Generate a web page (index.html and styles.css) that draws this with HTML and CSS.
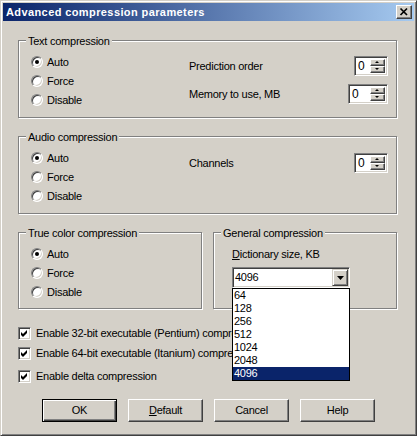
FILE: index.html
```html
<!DOCTYPE html>
<html>
<head>
<meta charset="utf-8">
<link rel="stylesheet" href="styles.css">
</head>
<body>
<div class="window">
  <div class="titlebar">
    <span class="title">Advanced compression parameters</span>
    <span class="close-btn"><svg width="14" height="12" viewBox="0 0 14 12"><path d="M3.5 2.5 L10 9 M10 2.5 L3.5 9" stroke="#000" stroke-width="1.7" fill="none"/></svg></span>
  </div>
  <div class="client">
    <div class="group group-wide">
      <span class="legend">Text compression</span>
      <div class="radios">
        <div class="radio-row"><span class="radio checked"></span><span>Auto</span></div>
        <div class="radio-row"><span class="radio"></span><span>Force</span></div>
        <div class="radio-row"><span class="radio"></span><span>Disable</span></div>
      </div>
      <div class="settings">
        <div class="setting"><span>Prediction order</span>
          <span class="spinner w34"><span class="spin-value">0</span><span class="spin-btns"><span class="spin-btn up"></span><span class="spin-btn down"></span></span></span>
        </div>
        <div class="setting"><span>Memory to use, MB</span>
          <span class="spinner w40"><span class="spin-value">0</span><span class="spin-btns"><span class="spin-btn up"></span><span class="spin-btn down"></span></span></span>
        </div>
      </div>
    </div>

    <div class="group group-wide group-audio">
      <span class="legend">Audio compression</span>
      <div class="radios">
        <div class="radio-row"><span class="radio checked"></span><span>Auto</span></div>
        <div class="radio-row"><span class="radio"></span><span>Force</span></div>
        <div class="radio-row"><span class="radio"></span><span>Disable</span></div>
      </div>
      <div class="settings settings-audio">
        <div class="setting"><span>Channels</span>
          <span class="spinner w34"><span class="spin-value">0</span><span class="spin-btns"><span class="spin-btn up"></span><span class="spin-btn down"></span></span></span>
        </div>
      </div>
    </div>

    <div class="row-bottom">
      <div class="group group-half">
        <span class="legend">True color compression</span>
        <div class="radios">
          <div class="radio-row"><span class="radio checked"></span><span>Auto</span></div>
          <div class="radio-row"><span class="radio"></span><span>Force</span></div>
          <div class="radio-row"><span class="radio"></span><span>Disable</span></div>
        </div>
      </div>
      <div class="group group-half group-general">
        <span class="legend">General compression</span>
        <div class="dict-label"><u>D</u>ictionary size, KB</div>
        <div class="combo">
          <span class="combo-value">4096</span>
          <span class="combo-btn"><svg width="7" height="4" viewBox="0 0 7 4"><path d="M0 0 H7 L3.5 4 Z" fill="#000"/></svg></span>
          <div class="dropdown">
            <div class="item">64</div>
            <div class="item">128</div>
            <div class="item">256</div>
            <div class="item">512</div>
            <div class="item">1024</div>
            <div class="item">2048</div>
            <div class="item selected">4096</div>
          </div>
        </div>
      </div>
    </div>

    <div class="checks">
      <div class="check-row"><span class="checkbox"><svg width="9" height="9" viewBox="0 0 9 9"><path d="M1 3 L3 5 L7 1 L7 4 L3 8 L1 6 Z" fill="#000"/></svg></span><span>Enable 32-bit executable (Pentium) compression</span></div>
      <div class="check-row"><span class="checkbox"><svg width="9" height="9" viewBox="0 0 9 9"><path d="M1 3 L3 5 L7 1 L7 4 L3 8 L1 6 Z" fill="#000"/></svg></span><span>Enable 64-bit executable (Itanium) compression</span></div>
      <div class="check-row check-last"><span class="checkbox"><svg width="9" height="9" viewBox="0 0 9 9"><path d="M1 3 L3 5 L7 1 L7 4 L3 8 L1 6 Z" fill="#000"/></svg></span><span>Enable delta compression</span></div>
    </div>

    <div class="buttons">
      <button class="btn btn-default">OK</button>
      <button class="btn"><u>D</u>efault</button>
      <button class="btn">Cancel</button>
      <button class="btn">Help</button>
    </div>
  </div>
</div>
</body>
</html>
```
FILE: styles.css
```css
* { box-sizing: border-box; }
html, body { margin: 0; padding: 0; }
body {
  font-family: "Liberation Sans", Arial, sans-serif;
  font-size: 11px;
  letter-spacing: -0.25px;
  color: #000;
  background: #d4d0c8;
}
.window {
  position: relative;
  width: 417px;
  height: 436px;
  background: #d4d0c8;
  border: 1px solid;
  border-color: #d4d0c8 #404040 #404040 #d4d0c8;
  box-shadow: inset 1px 1px #fff, inset -1px -1px #808080;
  padding: 2px;
  display: flex;
  flex-direction: column;
}
.titlebar {
  height: 18px;
  flex: none;
  display: flex;
  align-items: center;
  justify-content: space-between;
  padding: 0 2px 0 3px;
  background: linear-gradient(to right, #0a246a, #a6caf0);
}
.title {
  color: #fff;
  font-weight: bold;
  letter-spacing: 0.4px;
  line-height: 18px;
}
.close-btn {
  width: 16px;
  height: 14px;
  background: #d4d0c8;
  border: 1px solid;
  border-color: #fff #404040 #404040 #fff;
  box-shadow: inset -1px -1px #808080;
  display: flex;
  align-items: center;
  justify-content: center;
}
.close-btn svg { display: block; }
.client {
  flex: 1;
  padding: 19px 16px 0 15px;
  display: flex;
  flex-direction: column;
}
.group {
  position: relative;
  border: 1px solid #808080;
  box-shadow: inset 1px 1px #fff, 1px 1px #fff;
}
.group-wide {
  width: 379px;
  height: 78px;
  display: flex;
}
.group-audio { margin-top: 18px; }
.row-bottom {
  margin-top: 18px;
  display: flex;
  gap: 11px;
}
.group-half {
  width: 184px;
  height: 77px;
}
.legend {
  position: absolute;
  top: -6px;
  left: 7px;
  padding: 0 2px;
  line-height: 13px;
  background: #d4d0c8;
}
.radios {
  margin: 11px 0 0 12px;
  width: 158px;
}
.radio-row {
  height: 19px;
  display: flex;
  align-items: center;
}
.radio {
  position: relative;
  width: 12px;
  height: 12px;
  margin-right: 4px;
  border-radius: 50%;
  background: #fff;
  border: 1px solid;
  border-color: #808080 #fff #fff #808080;
  box-shadow: inset 1px 1px #404040, inset -1px -1px #d4d0c8;
}
.radio.checked::after {
  content: "";
  position: absolute;
  left: 3px;
  top: 3px;
  width: 4px;
  height: 4px;
  border-radius: 50%;
  background: #000;
}
.settings {
  flex: 1;
  margin: 15px 8px 0 0;
  display: flex;
  flex-direction: column;
  gap: 8px;
}
.settings-audio { margin-top: 16px; }
.setting {
  height: 20px;
  display: flex;
  align-items: center;
  justify-content: space-between;
}
.spinner {
  height: 20px;
  display: flex;
  background: #fff;
  border: 1px solid;
  border-color: #808080 #fff #fff #808080;
  box-shadow: inset 1px 1px #404040, inset -1px -1px #d4d0c8;
  padding: 2px;
}
.w34 { width: 34px; }
.w40 { width: 40px; }
.spin-value {
  flex: 1;
  line-height: 14px;
  padding-left: 1px;
  font-size: 12px;
}
.spin-btns {
  width: 15px;
  display: flex;
  flex-direction: column;
}
.spin-btn {
  position: relative;
  flex: 1;
  background: #d4d0c8;
  border: 1px solid;
  border-color: #fff #404040 #404040 #fff;
  box-shadow: inset -1px -1px #808080;
}
.spin-btn::after {
  content: "";
  position: absolute;
  left: 4px;
  width: 0;
  height: 0;
  border-left: 2px solid transparent;
  border-right: 2px solid transparent;
}
.spin-btn.up::after { top: 1px; border-bottom: 2px solid #000; }
.spin-btn.down::after { top: 1px; border-top: 2px solid #000; }
.dict-label {
  margin: 15px 0 0 18px;
  line-height: 13px;
}
.combo {
  position: relative;
  margin: 6px 0 0 18px;
  width: 118px;
  height: 21px;
  display: flex;
  background: #fff;
  border: 1px solid;
  border-color: #808080 #fff #fff #808080;
  box-shadow: inset 1px 1px #404040, inset -1px -1px #d4d0c8;
  padding: 1px;
}
.combo-value {
  flex: 1;
  line-height: 17px;
  padding-left: 1px;
}
.combo-btn {
  width: 16px;
  background: #d4d0c8;
  border: 1px solid;
  border-color: #d4d0c8 #404040 #404040 #d4d0c8;
  box-shadow: inset 1px 1px #fff, inset -1px -1px #808080;
  display: flex;
  align-items: center;
  justify-content: center;
}
.combo-btn svg { display: block; }
.dropdown {
  position: absolute;
  z-index: 2;
  left: -1px;
  top: 20px;
  width: 118px;
  height: 93px;
  background: #fff;
  border: 1px solid #000;
}
.item {
  height: 13px;
  line-height: 13px;
  padding-left: 1px;
}
.item.selected {
  background: #0a246a;
  color: #fff;
}
.checks {
  margin-top: 14px;
}
.check-row {
  height: 20px;
  display: flex;
  align-items: center;
  white-space: nowrap;
}
.check-last { margin-top: 3px; }
.checkbox {
  width: 13px;
  height: 13px;
  margin-right: 5px;
  flex: none;
  background: #fff;
  border: 1px solid;
  border-color: #808080 #fff #fff #808080;
  box-shadow: inset 1px 1px #404040, inset -1px -1px #d4d0c8;
  padding: 1px;
}
.checkbox svg { display: block; }
.buttons {
  margin: 13px 0 0 24px;
  display: flex;
  gap: 11px;
}
.btn {
  width: 75px;
  height: 23px;
  margin: 0;
  padding: 0;
  font: inherit;
  letter-spacing: inherit;
  color: #000;
  background: #d4d0c8;
  border: 1px solid;
  border-color: #fff #404040 #404040 #fff;
  box-shadow: inset -1px -1px #808080;
  text-align: center;
  line-height: 21px;
}
.btn-default {
  border-color: #000;
  box-shadow: inset 1px 1px #fff, inset -1px -1px #404040, inset -2px -2px #808080;
}
```
